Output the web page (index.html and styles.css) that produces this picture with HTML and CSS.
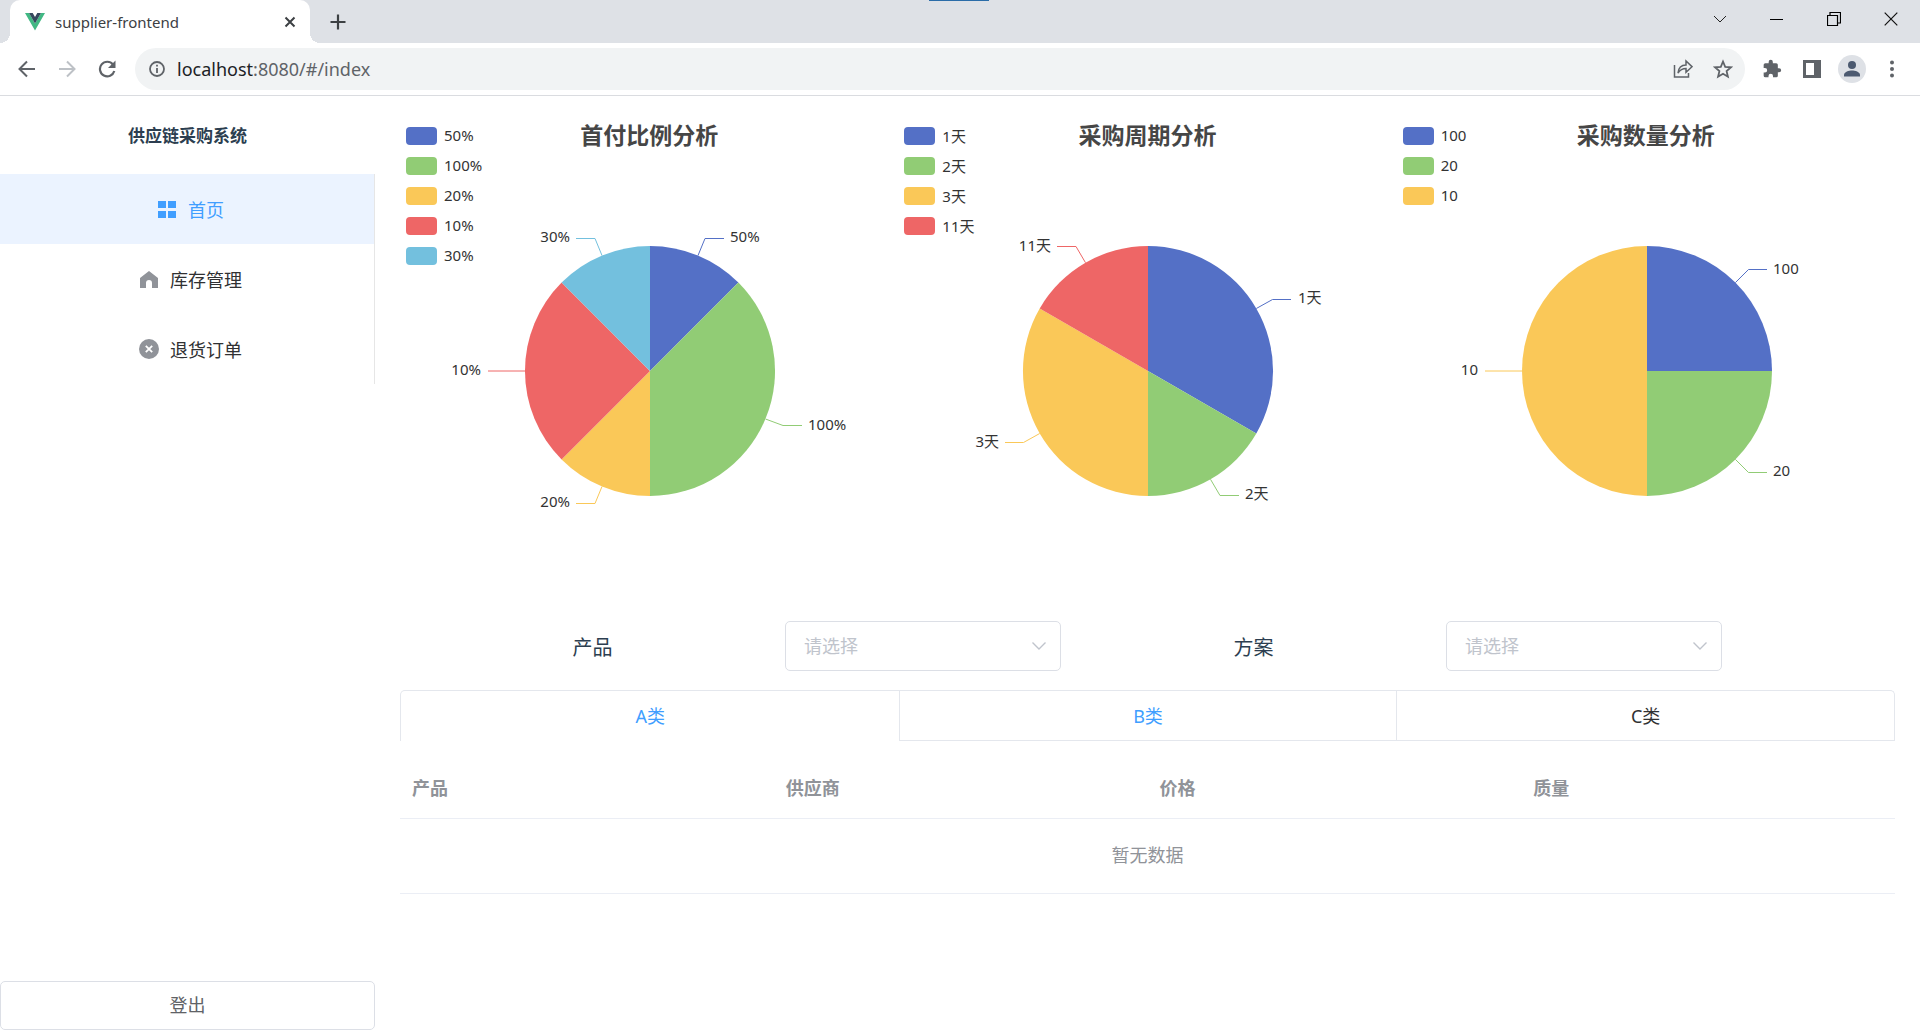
FILE: index.html
```html
<!DOCTYPE html>
<html lang="zh-CN">
<head>
<meta charset="utf-8">
<meta name="viewport" content="width=device-width, initial-scale=1">
<title>supplier-frontend</title>
<link rel="stylesheet" href="styles.css">
</head>
<body>
<header class="browser">
  <div class="tabstrip">
    <div class="tabstrip-marker"></div>
    <div class="browser-tab">
      <svg class="tab-logo" width="20" height="18" viewBox="0 0 20 18"><path d="M0 0h4l6 10.500L16 0h4L10 17.500z" fill="#41b883"/><path d="M4 0h3.700L10 4l2.300-4H16l-6 10.500z" fill="#35495e"/></svg>
      <span class="tab-title">supplier-frontend</span>
      <button class="icon-button tab-close" aria-label="Close tab"><svg width="12" height="12" viewBox="0 0 12 12"><path d="M1.500 1.500l9 9M10.500 1.500l-9 9" stroke="#3c4043" stroke-width="2"/></svg></button>
    </div>
    <button class="icon-button tab-new" aria-label="New tab"><svg width="16" height="16" viewBox="0 0 16 16"><path d="M8 .5v15M.5 8h15" stroke="#3c4043" stroke-width="2.200"/></svg></button>
    <div class="window-controls">
      <button class="icon-button" aria-label="Search tabs"><svg width="14" height="14" viewBox="0 0 14 14"><path d="M1 4l6 6 6-6" fill="none" stroke="#222" stroke-width="1"/></svg></button>
      <button class="icon-button" aria-label="Minimize"><svg width="14" height="14" viewBox="0 0 14 14"><path d="M0 7.500h13" stroke="#000"/></svg></button>
      <button class="icon-button" aria-label="Restore"><svg width="14" height="14" viewBox="0 0 14 14"><path d="M.5 3.500h10v10H.5zM3 3V.5h10.500v10.500H11" fill="none" stroke="#000" stroke-width="1.200"/></svg></button>
      <button class="icon-button" aria-label="Close"><svg width="14" height="14" viewBox="0 0 14 14"><path d="M.7.7l12.600 12.600M13.300.7L.7 13.300" stroke="#111" stroke-width="1.200"/></svg></button>
    </div>
  </div>
  <div class="toolbar">
    <button class="icon-button nav-button" aria-label="Back"><svg width="18" height="18" viewBox="0 0 18 18"><path d="M17 9H2M9 1.500L1.500 9 9 16.500" fill="none" stroke="#5f6368" stroke-width="2"/></svg></button>
    <button class="icon-button nav-button" aria-label="Forward"><svg width="18" height="18" viewBox="0 0 18 18"><path d="M1 9h15M9 1.500L16.500 9 9 16.500" fill="none" stroke="#bdc1c6" stroke-width="2"/></svg></button>
    <button class="icon-button nav-button" aria-label="Reload"><svg width="18" height="18" viewBox="0 0 18 18"><path d="M15 4.500A7.300 7.300 0 1 0 16.300 11" fill="none" stroke="#5f6368" stroke-width="2.200"/><path d="M17.500.5v7.500H10z" fill="#5f6368"/></svg></button>
    <div class="address">
      <svg width="16" height="16" viewBox="0 0 16 16"><circle cx="8" cy="8" r="7" fill="none" stroke="#5f6368" stroke-width="1.800"/><path d="M8 7v5M8 3.800v1.800" stroke="#5f6368" stroke-width="1.800"/></svg>
      <span class="url"><span class="url-host">localhost</span>:8080/#/index</span>
      <button class="icon-button" aria-label="Share"><svg width="20" height="20" viewBox="0 0 20 20" fill="none" stroke="#5f6368" stroke-width="1.500"><path d="M1.500 6v12h14v-4"/><path d="M5 14c.5-5 3-8 8-8V2l6 5.700-6 5.600V9.500c-4 0-6 1.500-8 4.500z"/></svg></button>
      <button class="icon-button" aria-label="Bookmark"><svg width="20" height="20" viewBox="0 0 20 20"><path d="M10 2.500l2.200 5.300 5.800.5-4.400 3.800 1.300 5.600-4.900-3-4.900 3 1.300-5.600L2 8.300l5.800-.5z" fill="none" stroke="#5f6368" stroke-width="1.800"/></svg></button>
    </div>
    <div class="toolbar-actions">
      <button class="icon-button" aria-label="Extensions"><svg width="20" height="20" viewBox="0 0 24 24"><path d="M20.500 11H19V7a2 2 0 0 0-2-2h-4V3.500a2.500 2.500 0 0 0-5 0V5H4a2 2 0 0 0-2 2v3.800h1.500a2.700 2.700 0 0 1 0 5.400H2V20a2 2 0 0 0 2 2h3.800v-1.500a2.700 2.700 0 0 1 5.400 0V22H17a2 2 0 0 0 2-2v-4h1.500a2.500 2.500 0 0 0 0-5z" fill="#5f6368"/></svg></button>
      <button class="icon-button" aria-label="Side panel"><svg width="18" height="18" viewBox="0 0 18 18"><path d="M0 0h18v18H0zM3 3v12h8V3z" fill="#5f6368" fill-rule="evenodd"/></svg></button>
      <button class="icon-button" aria-label="Profile"><svg width="28" height="28" viewBox="0 0 28 28"><circle cx="14" cy="14" r="14" fill="#dee1e6"/><circle cx="14" cy="10" r="4" fill="#4c5a70"/><path d="M6 21.500v-1.700c0-2.900 5-4.300 8-4.300s8 1.400 8 4.300v1.700z" fill="#4c5a70"/></svg></button>
      <button class="icon-button" aria-label="Menu"><svg width="18" height="18" viewBox="0 0 18 18" fill="#5f6368"><circle cx="9" cy="2.500" r="2"/><circle cx="9" cy="9" r="2"/><circle cx="9" cy="15.500" r="2"/></svg></button>
    </div>
  </div>
</header>

<div class="app">
  <aside class="sidebar">
    <h1 class="brand">供应链采购系统</h1>
    <nav class="menu">
      <a class="menu-item menu-item-active" href="#/index"><svg class="menu-icon" width="20" height="20" viewBox="0 0 20 20" fill="#409eff"><path d="M1 2h8v7H1zM11 2h8v7h-8zM1 12h8v7H1zM11 12h8v7h-8z"/></svg>首页</a>
      <a class="menu-item" href="#/stock"><svg class="menu-icon" width="20" height="20" viewBox="0 0 20 20" fill="#909399"><path d="M10 2l9 7v10h-6v-5a3 3 0 0 0-6 0v5H1V9z"/></svg>库存管理</a>
      <a class="menu-item" href="#/returns"><svg class="menu-icon" width="20" height="20" viewBox="0 0 20 20"><circle cx="10" cy="10" r="10" fill="#909399"/><path d="M6.800 6.800l6.400 6.400M13.200 6.800l-6.400 6.400" stroke="#fff" stroke-width="1.800"/></svg>退货订单</a>
    </nav>
    <button class="logout">登出</button>
  </aside>

  <main class="content">
    <section class="charts">
      <figure class="chart">
        <figcaption class="chart-title">首付比例分析</figcaption>
        <ul class="legend">
          <li><i class="swatch blue"></i>50%</li>
          <li><i class="swatch green"></i>100%</li>
          <li><i class="swatch yellow"></i>20%</li>
          <li><i class="swatch red"></i>10%</li>
          <li><i class="swatch cyan"></i>30%</li>
        </ul>
        <svg class="pie" width="440" height="300" viewBox="-220 -150 440 300">
          <path class="blue" d="M0 0V-125A125 125 0 0 1 88.400-88.400z"/>
          <path class="green" d="M0 0L88.400-88.400A125 125 0 0 1 0 125z"/>
          <path class="yellow" d="M0 0V125A125 125 0 0 1-88.400 88.400z"/>
          <path class="red" d="M0 0L-88.400 88.400A125 125 0 0 1-88.400-88.400z"/>
          <path class="cyan" d="M0 0L-88.400-88.400A125 125 0 0 1 0-125z"/>
          <path class="lead blue" d="M48-115.500L55-132.500H74"/>
          <path class="lead green" d="M115.500 48L133 54.500H152"/>
          <path class="lead yellow" d="M-48 115.500L-55 132.500H-74"/>
          <path class="lead red" d="M-125 0H-162"/>
          <path class="lead cyan" d="M-48-115.500L-55-132.500H-74"/>
          <text x="80" y="-129">50%</text>
          <text x="158" y="59">100%</text>
          <text class="end" x="-80" y="136">20%</text>
          <text class="end" x="-169" y="4">10%</text>
          <text class="end" x="-80" y="-129">30%</text>
        </svg>
      </figure>
      <figure class="chart">
        <figcaption class="chart-title">采购周期分析</figcaption>
        <ul class="legend">
          <li><i class="swatch blue"></i>1天</li>
          <li><i class="swatch green"></i>2天</li>
          <li><i class="swatch yellow"></i>3天</li>
          <li><i class="swatch red"></i>11天</li>
        </ul>
        <svg class="pie" width="440" height="300" viewBox="-220 -150 440 300">
          <path class="blue" d="M0 0V-125A125 125 0 0 1 108.300 62.500z"/>
          <path class="green" d="M0 0L108.300 62.500A125 125 0 0 1 0 125z"/>
          <path class="yellow" d="M0 0V125A125 125 0 0 1-108.300-62.500z"/>
          <path class="red" d="M0 0L-108.300-62.500A125 125 0 0 1 0-125z"/>
          <path class="lead blue" d="M108.300-62.500L124.500-71.500H143"/>
          <path class="lead green" d="M62.500 108.300L72 124.500H91"/>
          <path class="lead yellow" d="M-108.300 62.500L-124.500 71.500H-143"/>
          <path class="lead red" d="M-62.500-108.300L-72-124.500H-91"/>
          <text x="150" y="-68">1天</text>
          <text x="97" y="128">2天</text>
          <text class="end" x="-149" y="76">3天</text>
          <text class="end" x="-97" y="-120">11天</text>
        </svg>
      </figure>
      <figure class="chart">
        <figcaption class="chart-title">采购数量分析</figcaption>
        <ul class="legend">
          <li><i class="swatch blue"></i>100</li>
          <li><i class="swatch green"></i>20</li>
          <li><i class="swatch yellow"></i>10</li>
        </ul>
        <svg class="pie" width="440" height="300" viewBox="-220 -150 440 300">
          <path class="blue" d="M0 0V-125A125 125 0 0 1 125 0z"/>
          <path class="green" d="M0 0H125A125 125 0 0 1 0 125z"/>
          <path class="yellow" d="M0 0V125A125 125 0 0 1 0-125z"/>
          <path class="lead blue" d="M88.400-88.400L101.500-101.500H120"/>
          <path class="lead green" d="M88.400 88.400L101.500 101.500H120"/>
          <path class="lead yellow" d="M-125 0H-162"/>
          <text x="126" y="-97">100</text>
          <text x="126" y="105">20</text>
          <text class="end" x="-169" y="4">10</text>
        </svg>
      </figure>
    </section>

    <form class="filters">
      <label for="product">产品</label>
      <div class="select-box">
        <select id="product"><option>请选择</option></select>
        <svg class="chevron" width="14" height="8" viewBox="0 0 14 8"><path d="M.5.500L7 7l6.500-6.500" fill="none" stroke="#c0c4cc" stroke-width="1.400"/></svg>
      </div>
      <label for="plan">方案</label>
      <div class="select-box">
        <select id="plan"><option>请选择</option></select>
        <svg class="chevron" width="14" height="8" viewBox="0 0 14 8"><path d="M.5.500L7 7l6.500-6.500" fill="none" stroke="#c0c4cc" stroke-width="1.400"/></svg>
      </div>
    </form>

    <div class="tabs" role="tablist">
      <button class="tab tab-active" role="tab" aria-selected="true">A类</button>
      <button class="tab tab-hover" role="tab">B类</button>
      <button class="tab" role="tab">C类</button>
    </div>

    <table class="data">
      <thead><tr><th>产品</th><th>供应商</th><th>价格</th><th>质量</th></tr></thead>
      <tbody><tr><td class="empty" colspan="4">暂无数据</td></tr></tbody>
    </table>
  </main>
</div>
</body>
</html>
```

FILE: styles.css
```css
* {
  box-sizing: border-box;
}

body {
  margin: 0;
  min-height: 100vh;
  display: flex;
  flex-direction: column;
  background: #fff;
  color: #2c3e50;
  font-family: "Noto Sans", "Noto Sans CJK SC", sans-serif;
  font-size: 18px;
}

button,
select {
  font: inherit;
  color: inherit;
}

svg {
  display: block;
  flex: none;
}

.icon-button {
  display: flex;
  align-items: center;
  justify-content: center;
  padding: 0;
  border: 0;
  background: none;
}

/* Browser frame */
.tabstrip {
  position: relative;
  display: flex;
  height: 43px;
  padding: 0 1px 0 10px;
  background: #dee1e6;
}

.tabstrip-marker {
  position: absolute;
  top: 0;
  left: calc(50% - 31px);
  width: 60px;
  height: 1px;
  background: #2a6ca8;
}

.browser-tab {
  position: relative;
  display: flex;
  align-items: center;
  width: 300px;
  padding: 0 14px 0 15px;
  border-radius: 10px 10px 0 0;
  background: #fff;
}

.browser-tab::before,
.browser-tab::after {
  content: "";
  position: absolute;
  bottom: 0;
  width: 10px;
  height: 10px;
}

.browser-tab::before {
  left: -10px;
  background: radial-gradient(circle at 0 0, #dee1e6 10px, #fff 10px);
}

.browser-tab::after {
  right: -10px;
  background: radial-gradient(circle at 100% 0, #dee1e6 10px, #fff 10px);
}

.tab-title {
  flex: 1;
  margin-left: 10px;
  color: #3c4043;
  font-size: 15px;
}

.tab-new {
  width: 55px;
}

.window-controls {
  display: flex;
  margin-left: auto;
  height: 37px;
}

.window-controls .icon-button {
  width: 57px;
}

.toolbar {
  display: flex;
  align-items: center;
  height: 53px;
  padding-left: 7px;
  border-bottom: 1px solid #dadce0;
}

.nav-button {
  width: 40px;
}

.address {
  flex: 1;
  display: flex;
  align-items: center;
  gap: 20px;
  height: 42px;
  margin-left: 8px;
  padding: 0 12px 0 14px;
  border-radius: 21px;
  background: #f1f3f4;
}

.url {
  flex: 1;
  margin-left: -8px;
  color: #5f6368;
}

.url-host {
  color: #202124;
}

.toolbar-actions {
  display: flex;
  margin: 0 8px 0 7px;
}

.toolbar-actions .icon-button {
  width: 40px;
}

/* Application */
.app {
  flex: 1;
  display: grid;
  grid-template-columns: 375px 1fr;
}

.sidebar {
  display: flex;
  flex-direction: column;
}

.brand {
  margin: 0;
  padding-top: 2px;
  line-height: 76px;
  font-size: 17px;
  font-weight: 700;
  text-align: center;
}

.menu {
  border-right: 1px solid #e6e6e6;
}

.menu-item {
  display: flex;
  align-items: center;
  justify-content: center;
  height: 70px;
  padding-left: 2px;
  color: #303133;
  text-decoration: none;
}

.menu-item-active {
  background: #ebf3ff;
  color: #409eff;
}

.menu-icon {
  margin: 0 11px 0 5px;
}

.logout {
  height: 49px;
  margin-top: auto;
  padding: 0 0 4px;
  border: 1px solid #dcdfe6;
  border-radius: 5px;
  background: #fff;
  color: #606266;
}

.content {
  padding: 25px;
}

.charts {
  display: grid;
  grid-template-columns: repeat(3, 1fr);
}

.chart {
  display: grid;
  height: 500px;
  margin: 0;
}

.chart > * {
  grid-area: 1 / 1;
}

.chart-title {
  justify-self: center;
  color: #464646;
  font-size: 23px;
  font-weight: 700;
  line-height: 29px;
}

.legend {
  justify-self: start;
  margin: 0;
  padding: 0 0 0 6px;
  list-style: none;
}

.legend li {
  display: flex;
  align-items: center;
  gap: 7px;
  height: 30px;
  padding-bottom: 2px;
  color: #333;
  font-size: 15px;
}

.swatch {
  width: 31px;
  height: 18px;
  margin-top: 1px;
  border-radius: 4px;
}

.pie {
  place-self: center;
  margin-left: 2px;
  overflow: visible;
}

.pie text {
  fill: #333;
  font-size: 15px;
}

.pie .end {
  text-anchor: end;
}

.blue {
  background: #5470c6;
  fill: #5470c6;
  stroke: #5470c6;
}

.green {
  background: #91cc75;
  fill: #91cc75;
  stroke: #91cc75;
}

.yellow {
  background: #fac858;
  fill: #fac858;
  stroke: #fac858;
}

.red {
  background: #ee6666;
  fill: #ee6666;
  stroke: #ee6666;
}

.cyan {
  background: #73c0de;
  fill: #73c0de;
  stroke: #73c0de;
}

.pie path {
  stroke-width: 0;
}

.pie .lead {
  fill: none;
  stroke-width: 1;
}

.filters {
  display: grid;
  grid-template-columns: 385fr 276fr 385fr 276fr 173fr;
  align-items: center;
  font-size: 20px;
  text-align: center;
}

.select-box {
  position: relative;
}

.select-box select {
  display: block;
  width: 100%;
  height: 50px;
  padding: 0 38px 0 18px;
  border: 1px solid #dcdfe6;
  border-radius: 5px;
  background: #fff;
  color: #c0c4cc;
  font-size: 18px;
  appearance: none;
}

.chevron {
  position: absolute;
  top: 21px;
  right: 15px;
  pointer-events: none;
}

.tabs {
  display: grid;
  grid-template-columns: repeat(3, 1fr);
  margin-top: 19px;
  border: solid #e4e7ed;
  border-width: 1px 1px 0;
  border-radius: 5px 5px 0 0;
}

.tab {
  height: 50px;
  padding: 0 0 2px;
  border: solid #e4e7ed;
  border-width: 0 0 1px 1px;
  background: none;
  color: #303133;
}

.tab-active {
  border-color: transparent;
  color: #409eff;
}

.tab-hover {
  color: #409eff;
}

.data {
  width: 100%;
  margin-top: 19px;
  border-collapse: collapse;
  table-layout: fixed;
  color: #909399;
}

.data th,
.data td {
  padding: 0 12px 3px;
  border-bottom: 1px solid #ebeef5;
}

.data th {
  height: 58px;
  font-weight: 700;
  text-align: left;
}

.data .empty {
  height: 75px;
  text-align: center;
}
```
